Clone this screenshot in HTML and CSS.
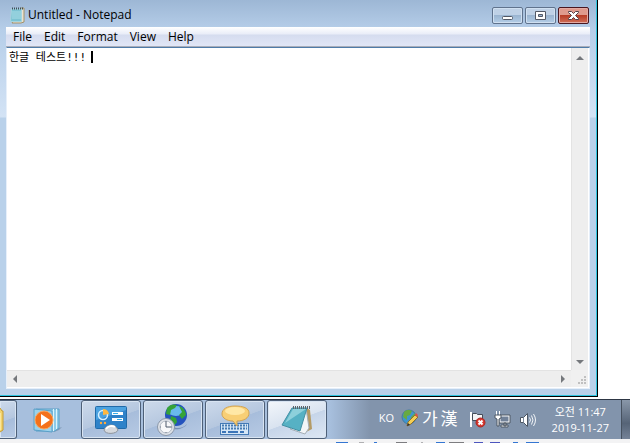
FILE: index.html
```html
<!DOCTYPE html>
<html lang="ko">
<head>
<meta charset="utf-8">
<title>Untitled - Notepad</title>
<link rel="stylesheet" href="styles.css">
</head>
<body>
<main class="window">
  <header class="titlebar">
    <svg class="app-icon" width="16" height="18" viewBox="0 0 16 18">
      <path d="M12 2h3v14l-3 1H3z" fill="#e9e2cf" stroke="#a0926c"/>
      <path d="M2.500 3h10v12.500h-11z" fill="#7cc3d3" stroke="#a5d5df"/>
      <path d="M3 6h9M3 8h9M3 10h9M3 12h9" stroke="#a9dde6"/>
      <path d="M3 2.500h11" stroke="#3f4d58" stroke-width="2" stroke-dasharray="1 1"/>
    </svg>
    <h1 class="title">Untitled - Notepad</h1>
    <div class="captions">
      <button class="caption" aria-label="Minimize"><svg width="13" height="11" viewBox="0 0 13 11"><rect x="1.500" y="6.500" width="10" height="3" rx="1" fill="#fff" stroke="#535966"/></svg></button>
      <button class="caption" aria-label="Maximize"><svg width="13" height="11" viewBox="0 0 13 11"><path d="M1.500 1.500h10v8h-10zM4.500 4.500v2h4v-2z" fill="#fff" fill-rule="evenodd" stroke="#535966"/></svg></button>
      <button class="caption close" aria-label="Close"><svg width="13" height="11" viewBox="0 0 13 11"><path d="M1.500 1.500h3l2 2 2-2h3v1l-3 3 3 3v1h-3l-2-2-2 2h-3v-1l3-3-3-3z" fill="#fff" stroke="#56424a"/></svg></button>
    </div>
  </header>
  <nav class="menu">
    <button>File</button><button>Edit</button><button>Format</button><button>View</button><button>Help</button>
  </nav>
  <section class="editor">
    <div class="page">
      <textarea class="text" aria-label="Text editor" spellcheck="false">한글 테스트!!!</textarea>
      <i class="caret"></i>
    </div>
    <div class="vbar">
      <svg width="8" height="4" viewBox="0 0 8 4"><path d="M0 4l4-4 4 4z" fill="#75787c"/></svg>
      <svg width="8" height="4" viewBox="0 0 8 4"><path d="M0 0h8L4 4z" fill="#75787c"/></svg>
    </div>
    <div class="hbar">
      <svg width="4" height="8" viewBox="0 0 4 8"><path d="M4 0v8L0 4z" fill="#75787c"/></svg>
      <svg width="4" height="8" viewBox="0 0 4 8"><path d="M0 0v8l4-4z" fill="#75787c"/></svg>
    </div>
    <div class="grip">
      <svg width="9" height="9" viewBox="0 0 9 9"><path d="M7 0h2v2H7zM7 3h2v2H7zM4 3h2v2H4zM7 6h2v2H7zM4 6h2v2H4zM1 6h2v2H1z" fill="#c0c0c0"/></svg>
    </div>
  </section>
</main>
<footer class="taskbar">
  <button class="task cut" aria-label="Explorer"><svg width="4" height="26" viewBox="0 0 4 26"><path d="M-6 1h6l2 3h1v19l-3 2h-6z" fill="#f2d36c" stroke="#c59b35"/><path d="M0 6h1v17H0z" fill="#fbe69a"/></svg></button>
  <button class="task flat" aria-label="Media Player">
    <svg width="30" height="28" viewBox="0 0 30 28">
      <path d="M20 24l9-3-3 3-5 2z" fill="#8099b5"/>
      <path d="M3 3l23 0v19l-4 3H3z" fill="#8ecbe8" stroke="#5a9fc6"/>
      <path d="M1 3l18 2v21L1 24z" fill="#9bd2ec" stroke="#5aa0c8"/>
      <path d="M20.500 3v22M23.500 3v20" stroke="#ddf4fb"/>
      <circle cx="11" cy="14" r="9" fill="#f4711b" stroke="#fba55c"/>
      <path d="M8 8l9 6-9 6z" fill="#fff"/>
    </svg>
  </button>
  <button class="task" aria-label="Control Panel">
    <svg width="34" height="30" viewBox="0 0 34 30">
      <rect x="1.500" y="1.500" width="31" height="22" rx="1" fill="#4ba2e0" stroke="#206aa9"/>
      <path d="M2 15L32 5v18H2z" fill="#2e82c9"/>
      <circle cx="9" cy="10" r="4.500" fill="none" stroke="#d5efff" stroke-width="1.500"/>
      <path d="M9 10V4q5 0 6 5z" fill="#ffb740"/>
      <path d="M18 8.500h11M18 14.500h11" stroke="#fff" stroke-width="3"/>
      <path d="M19 8.500h5M23 14.500h5" stroke="#36aeea"/>
      <circle cx="7" cy="18" r="1.200" fill="#ffac3c"/><circle cx="11" cy="18" r="1.200" fill="#ffac3c"/>
      <path d="M10 25c1-3 4-5 7-5s6 2 7 5c-1 4-13 5-14 0z" fill="#d5d9de" stroke="#8d949d"/>
      <path d="M12 24c2-3 6-4 9-2" stroke="#fff" stroke-width="2" fill="none"/>
    </svg>
  </button>
  <button class="task" aria-label="Region and time">
    <svg width="32" height="34" viewBox="0 0 32 34">
      <path d="M15 23c3 3 11 3 15-2-2 4-9 6-13 5z" fill="#7890b4"/>
      <circle cx="19" cy="12" r="11" fill="#2453bd"/>
      <ellipse cx="19" cy="8" rx="8" ry="5" fill="#69b9ee"/>
      <path d="M10 5c3-4 7-4 10-3l-2 3-4 2-1 5-4-1zM22 3c4 1 7 5 7 9l-4 4-3-4 3-3zM14 13l5 2 1 4-3 4-4-5z" fill="#35a338"/>
      <circle cx="9" cy="24" r="8.500" fill="#dfe3e9" stroke="#8996a8"/>
      <circle cx="9" cy="24" r="6" fill="#f7f8fa" stroke="#b3bbc6"/>
      <path d="M9 18v6h5" stroke="#4e5a6c" fill="none"/>
      <path d="M3 24h1M9 29v1M14 24h1" stroke="#6e7886"/>
    </svg>
  </button>
  <button class="task" aria-label="Language settings">
    <svg width="32" height="30" viewBox="0 0 32 30">
      <rect x="1.500" y="18.500" width="28" height="11" fill="#d5e6f6" stroke="#457ab5"/>
      <path d="M3 20.500h25M3 23.500h25" stroke="#477bb2" stroke-width="2" stroke-dasharray="2 1"/>
      <path d="M3 27h25" stroke="#3c75b8" stroke-width="2" stroke-dasharray="4 2 10 2 4 3"/>
      <path d="M16 1C8 1 3 4 3 9c0 4 5 7 11 7l4 5v-5c7 0 12-3 12-8S24 1 16 1z" fill="#f8cf75" stroke="#d3a450"/>
      <ellipse cx="16" cy="6" rx="10" ry="4" fill="#ffe8a6"/>
    </svg>
  </button>
  <button class="task active" aria-label="Notepad">
    <svg width="32" height="30" viewBox="0 0 32 30">
      <path d="M26 3l3 2 2 19-6 3z" fill="#b49b65"/>
      <path d="M25 3l3 20-4 6-15-5z" fill="#f2f5f7" stroke="#a5afb8"/>
      <path d="M11 3h15l-7 23L1 20z" fill="#56b1c4" stroke="#428fa3"/>
      <path d="M12 4h13L4 18z" fill="#8dd0db"/>
      <path d="M12 2.500h17" stroke="#5c6369" stroke-width="3" stroke-dasharray="1 1"/>
    </svg>
  </button>
  <div class="tray">
    <span class="lang">KO</span>
    <svg class="globe" width="18" height="18" viewBox="0 0 18 18">
      <circle cx="8" cy="8" r="7" fill="#4096ce" stroke="#447aa0"/>
      <path d="M3 3c3-3 6-2 8-1L9 6 6 7v4L2 8zM10 8l4-4v7l-5 3z" fill="#67aa43"/>
      <path d="M7 13l7-7 3 2-7 7-4 2z" fill="#f4cf54" stroke="#8c6f31"/>
      <path d="M14 6l1-2 2 2-1 2z" fill="#dd5546"/><path d="M6 17l1-3 2 2z" fill="#333"/>
    </svg>
    <span class="ime">가</span><span class="ime hanja">漢</span>
    <svg class="flag" width="17" height="17" viewBox="0 0 17 17">
      <path d="M2 1v15" stroke="#fff" stroke-width="2"/><path d="M3.500 2.500h4l1 1h5v7h-5l-1-1h-4z" fill="#f4f5f7" stroke="#454d58"/>
      <circle cx="11.500" cy="11.500" r="4.500" fill="#d8372e" stroke="#a82724"/><path d="M9.500 9.500l4 4m0-4l-4 4" stroke="#fff" stroke-width="2"/>
    </svg>
    <svg class="network" width="18" height="17" viewBox="0 0 18 17">
      <path d="M5 4h11v8H5zM10 12h2v3h-2zM7 14h7v2H7z" fill="#fff" stroke="#4c5663"/><path d="M6.500 5.500h8v5h-8z" fill="#718198"/>
      <path d="M2.500 0v4m3-4v4" stroke="#fff"/><path d="M1 4h6v3L5 8v7H3V8L1 7z" fill="#fff" stroke="#4c5663"/>
    </svg>
    <svg class="sound" width="17" height="16" viewBox="0 0 17 16">
      <path d="M1.500 5.500h3l4-4v13l-4-4h-3z" fill="#fff" stroke="#4c5663"/><path d="M4.500 6v4" stroke="#7c899b"/>
      <path d="M10.500 5.500q2 2.500 0 5M12.500 3.500q3 4.500 0 9M14.500 2q4 6 0 12" fill="none" stroke="#f1f4f7"/>
    </svg>
    <time class="clock"><span>오전 11:47</span><span>2019-11-27</span></time>
    <button class="desktop" aria-label="Show desktop"></button>
  </div>
</footer>
<div class="edge"><svg width="210" height="4" viewBox="0 0 210 4">
  <path d="M0 3.500h12M38 3.500h3M100 3.500h9M177 3.500h5M190 3.500h13" stroke="#3476d2"/><path d="M23 3.500h5M85 3.500h2" stroke="#b0b0b2"/><path d="M60 3.500h11M113 3.500h15" stroke="#7d7d80"/><path d="M138 3.500h9M154 3.500h10" stroke="#4d56be"/>
</svg></div>
</body>
</html>
```
FILE: styles.css
```css
* { box-sizing: border-box; }
html { height: 100%; }
body {
  margin: 0;
  height: 100%;
  display: flex;
  flex-direction: column;
  overflow: hidden;
  background: #fff;
  font: 12px/16px "Open Sans", "Noto Sans CJK KR", sans-serif;
  color: #000;
}
button { margin: 0; padding: 0; border: 0; background: none; font: inherit; color: inherit; }
svg { display: block; flex: none; }

.window {
  flex: 1;
  min-height: 0;
  margin: 0 32px 2px 0;
  padding: 0 7px 7px 6px;
  display: flex;
  flex-direction: column;
  border: solid #000;
  border-width: 0 1px 1px 0;
  box-shadow: inset -1px -1px #30c5df;
  background: linear-gradient(#9db7d5, #b6cee9 30px, #d3e3f5 117px, #b9d1ea 118px);
}
.titlebar { flex: none; height: 27px; padding: 3px 1px 0 3px; display: flex; align-items: center; }
.title { flex: 1; margin: 0 0 0 3px; font-size: 12px; font-weight: 400; }
.captions { display: flex; gap: 2px; }
.caption {
  width: 31px;
  height: 17px;
  display: grid;
  place-items: center;
  border: 1px solid #60738d;
  border-radius: 2px;
  box-shadow: inset 0 0 0 1px #d0e0f1;
  background: linear-gradient(#bfd1e6 50%, #9bb5d1 50%, #b4cee7);
}
.close {
  border-color: #491720;
  box-shadow: inset 0 0 0 1px #e4aaa3;
  background: linear-gradient(#df9a8d 50%, #b83d27 50%, #d07059);
}
.menu {
  flex: none;
  height: 20px;
  padding-left: 1px;
  display: flex;
  align-items: center;
  border-bottom: 1px solid #a9adb9;
  background: linear-gradient(#fff, #e9edf8 7px, #d5dcef 8px, #e1e6f6);
}
.menu button { padding: 0 6px; }

.editor {
  flex: 1;
  min-height: 0;
  padding: 0 1px 1px 0;
  display: grid;
  grid-template: 1fr 17px / 1fr 17px;
  border: 1px solid #e6effa;
  border-top-color: #4f7ba8;
  background: #fff;
}
.page { position: relative; display: flex; }
.text {
  flex: 1;
  min-width: 0;
  margin: 0;
  padding: 2px;
  border: 0;
  outline: 0;
  resize: none;
  overflow: hidden;
  background: #fff;
  color: #000;
  font: 11px/16px "DejaVu Sans Mono", "Noto Sans CJK KR", monospace;
}
.caret { position: absolute; left: 84px; top: 3px; width: 2px; height: 12px; background: #000; }
.vbar, .hbar { display: flex; align-items: center; justify-content: space-between; background: #eee; }
.vbar { flex-direction: column; padding: 8px 0 6px; border-left: 1px solid #e3e3e3; }
.hbar { padding: 0 6px; border-top: 1px solid #e3e3e3; }
.grip { display: flex; align-items: flex-end; justify-content: flex-end; padding: 2px; background: #f0f0f0; }

.taskbar {
  flex: none;
  height: 40px;
  display: flex;
  border-top: 1px solid #2d3644;
  background: linear-gradient(90deg, #a7bfdd 330px, #8294ac 370px);
}
.task {
  flex: none;
  width: 60px;
  margin-right: 2px;
  display: grid;
  place-items: center;
  border: 1px solid #4e6078;
  border-radius: 3px;
  box-shadow: inset 0 0 0 1px #d8e4f2;
  background: linear-gradient(160deg, #cddaeb, #b5c7df 50%, #a7bddb 51%, #b7cae4);
}
.cut { width: 17px; margin: 0; border-left: 0; border-radius: 0 3px 3px 0; justify-items: start; }
.flat { width: 62px; border-color: transparent; box-shadow: none; background: none; }
.active { background: linear-gradient(160deg, #f3f7fb, #d9e3f0 50%, #c6d5e9 51%, #dde7f4); }

.tray { flex: 1; display: flex; align-items: center; justify-content: flex-end; color: #fff; }
.lang { margin-right: 7px; padding-bottom: 4px; font-size: 11px; }
.globe { margin-bottom: 4px; }
.ime { margin-left: 3px; padding-bottom: 4px; font: 17px/20px "Noto Sans CJK KR", sans-serif; }
.flag { margin-left: 11px; }
.network { margin-left: 8px; }
.sound { margin-left: 7px; }
.clock { margin: 0 12px 0 16px; display: flex; flex-direction: column; align-items: center; font-size: 11px; }
.desktop { width: 9px; align-self: stretch; border-left: 1px solid #46515f; background: linear-gradient(#8997a9, #566477 60%, #748297); }
.edge { flex: none; height: 4px; display: flex; padding-left: 336px; background: #f3f3f4; }
```
